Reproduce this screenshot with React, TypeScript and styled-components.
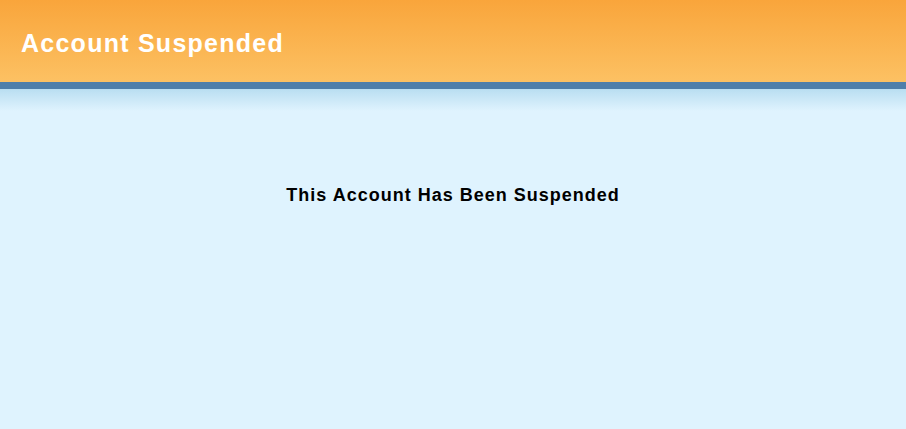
import styled, { createGlobalStyle } from "styled-components";

const GlobalStyle = createGlobalStyle`
  html, body {
    margin: 0;
    padding: 0;
    background: #dff3fe;
    font-family: "Liberation Sans", Arial, sans-serif;
  }
`;

const Page = styled.div`
  min-height: 429px;
  background: #dff3fe;
`;

const Header = styled.div`
  height: 82px;
  display: flex;
  align-items: center;
  padding: 0 21px;
  background: linear-gradient(to bottom, #f9a53b 0%, #fcc163 100%);
  border-bottom: 7px solid #4f7faa;
`;

const Title = styled.h1`
  margin: 0;
  padding-top: 4px;
  color: #ffffff;
  font-size: 25px;
  font-weight: bold;
  letter-spacing: 1.25px;
`;

const Shade = styled.div`
  height: 22px;
  background: linear-gradient(to bottom, #b9def1 0%, #dff3fe 100%);
`;

const Message = styled.div`
  padding-top: 74px;
  text-align: center;
  color: #000000;
  font-size: 18px;
  font-weight: bold;
  letter-spacing: 1px;
`;

const App = () => {
  return (
    <Page>
      <GlobalStyle />
      <Header>
        <Title>Account Suspended</Title>
      </Header>
      <Shade />
      <Message>This Account Has Been Suspended</Message>
    </Page>
  );
};

export default App;
